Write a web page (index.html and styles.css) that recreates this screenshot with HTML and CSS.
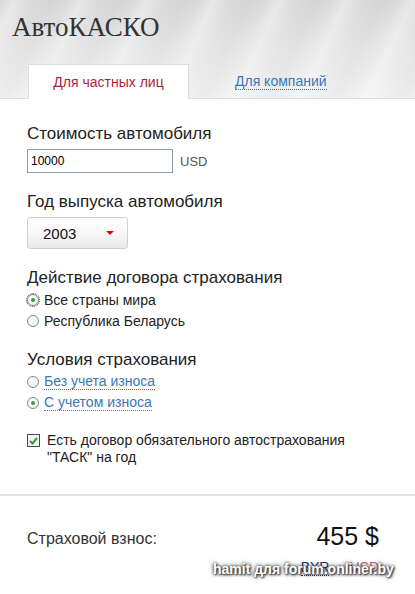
FILE: index.html
```html
<!DOCTYPE html>
<html lang="ru">
<head>
<meta charset="utf-8">
<title>АвтоКАСКО</title>
<link rel="stylesheet" href="styles.css">
</head>
<body>
<div class="page">
  <header class="header">
    <h1 class="title">АвтоКАСКО</h1>
    <nav class="tabs">
      <span class="tab tab-active">Для частных лиц</span>
      <a class="tab tab-link" href="#"><span class="dotted">Для компаний</span></a>
    </nav>
  </header>

  <main class="form">
    <section class="field">
      <div class="label">Стоимость автомобиля</div>
      <div class="input-row">
        <div class="input">10000</div>
        <span class="unit">USD</span>
      </div>
    </section>

    <section class="field">
      <div class="label">Год выпуска автомобиля</div>
      <div class="select">
        <span class="select-value">2003</span>
        <span class="caret"></span>
      </div>
    </section>

    <section class="field">
      <div class="label">Действие договора страхования</div>
      <div class="options">
        <div class="option"><span class="radio checked focused"></span><span>Все страны мира</span></div>
        <div class="option"><span class="radio"></span><span>Республика Беларусь</span></div>
      </div>
    </section>

    <section class="field">
      <div class="label">Условия страхования</div>
      <div class="options">
        <div class="option"><span class="radio"></span><a class="opt-link" href="#">Без учета износа</a></div>
        <div class="option"><span class="radio checked"></span><a class="opt-link" href="#">С учетом износа</a></div>
      </div>
    </section>

    <section class="field check-field">
      <span class="checkbox">
        <svg width="9" height="8" viewBox="0 0 9 8"><path d="M1 4 L3.5 6.5 L8 1" fill="none" stroke="#3a9a2a" stroke-width="2"/></svg>
      </span>
      <span class="check-text">Есть договор обязательного автострахования<br>"ТАСК" на год</span>
    </section>
  </main>

  <footer class="result">
    <div class="result-row">
      <span class="result-label">Страховой взнос:</span>
      <span class="result-value">455 $</span>
    </div>
    <div class="currency">
      <a class="cur-link" href="#">BYR</a>
      <span class="cur-active">USD</span>
    </div>
    <div class="watermark">hamit для forum.onliner.by</div>
  </footer>
</div>
</body>
</html>
```

FILE: styles.css
```css
* { box-sizing: border-box; }
html, body { margin: 0; padding: 0; background: #fff; }
body {
  font-family: "Liberation Sans", Arial, sans-serif;
  color: #222;
  width: 415px;
  height: 594px;
  overflow: hidden;
}
.page { position: relative; }

.header {
  height: 99px;
  border-bottom: 1px solid #dcdcdc;
  background:
    repeating-linear-gradient(115deg, rgba(255,255,255,0) 0px, rgba(255,255,255,0.35) 14px, rgba(255,255,255,0) 30px, rgba(0,0,0,0.02) 46px, rgba(255,255,255,0) 60px),
    linear-gradient(to bottom, #d9d9d9 0%, #e6e6e6 50%, #f1f1f1 100%);
  display: flex;
  flex-direction: column;
  justify-content: space-between;
}
.title {
  margin: 0;
  padding: 12px 0 0 12px;
  font-family: "Liberation Serif", "Times New Roman", serif;
  font-weight: normal;
  font-size: 27px;
  line-height: 30px;
  color: #333;
}
.tabs {
  display: flex;
  align-items: flex-end;
  padding-left: 28px;
  margin-bottom: -1px;
}
.tab {
  font-size: 14px;
  line-height: 34px;
  height: 35px;
  text-decoration: none;
}
.tab-active {
  width: 161px;
  text-align: center;
  background: #fff;
  border: 1px solid #dedede;
  border-bottom: none;
  color: #b01e3c;
}
.tab-link {
  margin-left: 46px;
  color: #3a78b5;
}
.dotted {
  border-bottom: 1px dotted #3a78b5;
}

.form {
  padding: 25px 0 0 27px;
}
.field { margin-bottom: 19px; }
.label {
  font-size: 17px;
  line-height: 20px;
  color: #222;
  margin-bottom: 5px;
}
.input-row {
  display: flex;
  align-items: center;
}
.input {
  width: 146px;
  height: 24px;
  border: 1px solid #8c9eab;
  font-size: 12px;
  line-height: 22px;
  padding-left: 3px;
  color: #000;
}
.unit {
  margin-left: 7px;
  font-size: 13px;
  color: #555;
}
.select {
  width: 101px;
  height: 32px;
  border: 1px solid #d0d0d0;
  border-radius: 3px;
  background: linear-gradient(to bottom, #ffffff 0%, #f6f6f6 55%, #e9e9e9 100%);
  display: flex;
  align-items: center;
  justify-content: space-between;
  padding: 0 13px 0 15px;
}
.select-value {
  font-size: 15px;
  color: #111;
}
.caret {
  width: 0;
  height: 0;
  border-left: 4px solid transparent;
  border-right: 4px solid transparent;
  border-top: 4px solid #e2061c;
}
.options { margin-top: -4px; }
.option {
  display: flex;
  align-items: center;
  height: 21px;
  font-size: 14px;
  color: #222;
}
.radio {
  width: 12px;
  height: 12px;
  border: 1px solid #7a8a99;
  border-radius: 50%;
  background: radial-gradient(circle at 40% 35%, #ffffff 0%, #ececec 100%);
  margin-right: 5px;
  margin-top: 1px;
  position: relative;
  flex: none;
}
.radio.checked::after {
  content: "";
  position: absolute;
  left: 3px;
  top: 3px;
  width: 4px;
  height: 4px;
  border-radius: 50%;
  background: #2fa02a;
}
.radio.focused {
  outline: 1px dotted #444;
  outline-offset: 0px;
}
.opt-link {
  color: #3a78b5;
  text-decoration: none;
  border-bottom: 1px dotted #3a78b5;
  line-height: 15px;
}
.field:nth-child(4) { margin-bottom: 19px; }
.check-field {
  display: flex;
  align-items: flex-start;
  margin-top: 0;
}
.checkbox {
  width: 13px;
  height: 13px;
  border: 1px solid #2f4f6f;
  background: #f4f4f4;
  margin-top: 2px;
  margin-right: 7px;
  display: flex;
  align-items: center;
  justify-content: center;
  flex: none;
}
.check-text {
  font-size: 14px;
  line-height: 17px;
  color: #222;
}

.result {
  margin-top: 28px;
  border-top: 2px solid #e1e1e1;
  padding: 26px 36px 0 27px;
  position: relative;
  height: 110px;
}
.result-row {
  display: flex;
  justify-content: space-between;
  align-items: center;
}
.result-label {
  font-size: 16px;
  color: #333;
  margin-top: 5px;
}
.result-value {
  font-size: 25px;
  color: #111;
}
.currency {
  display: flex;
  justify-content: flex-end;
  gap: 20px;
  margin-top: 8px;
  font-size: 14px;
}
.cur-link {
  color: #1d2a7a;
  text-decoration: none;
  border-bottom: 1px dotted #1d2a7a;
}
.cur-active { color: #c06070; }
.watermark {
  position: absolute;
  left: 213px;
  top: 65px;
  font-family: "Liberation Sans", Arial, sans-serif;
  font-weight: bold;
  font-size: 14px;
  color: #fff;
  text-shadow: 0 0 3px #333, 0 0 5px #555, 1px 1px 2px #222;
  white-space: nowrap;
}
```
